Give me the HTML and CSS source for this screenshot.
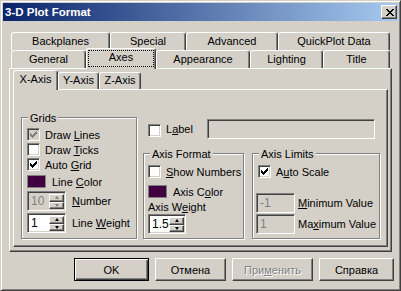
FILE: index.html
```html
<!DOCTYPE html>
<html lang="en">

<head>
    <meta charset="UTF-8">
    <title>3-D Plot Format</title>
    <link rel="stylesheet" href="styles.css">
</head>

<body>
    <div class="window">
        <div class="titlebar">
            <span class="title">3-D Plot Format</span>
            <span class="close">
                <svg width="8" height="7" viewBox="0 0 8 7" shape-rendering="crispEdges"><path d="M0 0h2v1H0zM6 0h2v1H6zM1 1h2v1H1zM5 1h2v1H5zM2 2h4v1H2zM3 3h2v1H3zM2 4h4v1H2zM1 5h2v1H1zM5 5h2v1H5zM0 6h2v1H0zM6 6h2v1H6z"/></svg>
            </span>
        </div>

        <div class="tabs">
            <div class="tab-row">
                <div class="tab" style="width: 99px">Backplanes</div>
                <div class="tab" style="width: 76px">Special</div>
                <div class="tab" style="width: 92px">Advanced</div>
                <div class="tab" style="width: 112px">QuickPlot Data</div>
            </div>
            <div class="tab-row">
                <div class="tab" style="width: 75px">General</div>
                <div class="tab active" style="width: 70px">Axes</div>
                <div class="tab" style="width: 94px">Appearance</div>
                <div class="tab" style="width: 73px">Lighting</div>
                <div class="tab" style="width: 67px">Title</div>
            </div>

            <div class="panel outer">
                <div class="subtabs">
                    <div class="subtab active" style="width: 45px">X-Axis</div>
                    <div class="subtab" style="width: 41px">Y-Axis</div>
                    <div class="subtab" style="width: 42px">Z-Axis</div>
                </div>

                <div class="panel inner">
                    <div class="group grids">
                        <span class="group-title">Grids</span>
                        <div class="row">
                            <span class="check disabled"><svg viewBox="0 0 7 7" shape-rendering="crispEdges"><path d="M6 0h1v1H6zM5 1h2v1H5zM0 2h1v1H0zM4 2h3v1H4zM0 3h2v1H0zM3 3h3v1H3zM0 4h5v1H0zM1 5h3v1H1zM2 6h1v1H2z"/></svg></span>
                            <span>Draw <u>L</u>ines</span>
                        </div>
                        <div class="row">
                            <span class="check"></span>
                            <span>Draw <u>T</u>icks</span>
                        </div>
                        <div class="row">
                            <span class="check"><svg viewBox="0 0 7 7" shape-rendering="crispEdges"><path d="M6 0h1v1H6zM5 1h2v1H5zM0 2h1v1H0zM4 2h3v1H4zM0 3h2v1H0zM3 3h3v1H3zM0 4h5v1H0zM1 5h3v1H1zM2 6h1v1H2z"/></svg></span>
                            <span>Auto <u>G</u>rid</span>
                        </div>
                        <div class="row swatch-row">
                            <span class="swatch"></span>
                            <span>Line <u>C</u>olor</span>
                        </div>
                        <div class="row spin-row">
                            <span class="spin disabled">
                                <span class="spin-text">10</span>
                                <span class="spin-btns"><span class="up"></span><span class="dn"></span></span>
                            </span>
                            <span><u>N</u>umber</span>
                        </div>
                        <div class="row spin-row gap-top">
                            <span class="spin">
                                <span class="spin-text">1</span>
                                <span class="spin-btns"><span class="up"></span><span class="dn"></span></span>
                            </span>
                            <span>Line <u>W</u>eight</span>
                        </div>
                    </div>

                    <div class="right">
                        <div class="label-row">
                            <span class="check label-check"></span>
                            <span class="label-text">L<u>a</u>bel</span>
                            <span class="field label-field"></span>
                        </div>

                        <div class="groups">
                            <div class="group fmt">
                                <span class="group-title">Axis Format</span>
                                <div class="row">
                                    <span class="check"></span>
                                    <span><u>S</u>how Numbers</span>
                                </div>
                                <div class="row swatch-row">
                                    <span class="swatch"></span>
                                    <span>Axis C<u>o</u>lor</span>
                                </div>
                                <div class="caption">Axis W<u>e</u>ight</div>
                                <span class="spin small">
                                    <span class="spin-text">1.5</span>
                                    <span class="spin-btns"><span class="up"></span><span class="dn"></span></span>
                                </span>
                            </div>

                            <div class="group limits">
                                <span class="group-title">Axis Limits</span>
                                <div class="row">
                                    <span class="check"><svg viewBox="0 0 7 7" shape-rendering="crispEdges"><path d="M6 0h1v1H6zM5 1h2v1H5zM0 2h1v1H0zM4 2h3v1H4zM0 3h2v1H0zM3 3h3v1H3zM0 4h5v1H0zM1 5h3v1H1zM2 6h1v1H2z"/></svg></span>
                                    <span>A<u>u</u>to Scale</span>
                                </div>
                                <div class="value-rows">
                                    <div class="row value-row">
                                        <span class="field value">-1</span>
                                        <span><u>M</u>inimum Value</span>
                                    </div>
                                    <div class="row value-row">
                                        <span class="field value">1</span>
                                        <span>Ma<u>x</u>imum Value</span>
                                    </div>
                                </div>
                            </div>
                        </div>
                    </div>
                </div>
            </div>
        </div>

        <div class="buttons">
            <button class="default" style="width: 75px">OK</button>
            <button style="width: 71px">Отмена</button>
            <button class="off" style="width: 81px">При<u>м</u>енить</button>
            <button style="width: 75px">Справка</button>
        </div>
    </div>
</body>

</html>
```

FILE: styles.css
```css
* {
    margin: 0;
    padding: 0;
    box-sizing: border-box;
}

body {
    background: #D4D0C8;
    font-family: "Liberation Sans", Arial, sans-serif;
    font-size: 11px;
    color: #000;
}

.window {
    width: 401px;
    height: 291px;
    padding: 2px;
    background: #D4D0C8;
    border: 1px solid;
    border-color: #D4D0C8 #404040 #404040 #D4D0C8;
    box-shadow: inset 1px 1px #fff, inset -1px -1px #808080;
}

/* title bar */

.titlebar {
    height: 18px;
    display: flex;
    align-items: center;
    justify-content: space-between;
    padding: 0 1px 0 2px;
    background: linear-gradient(to right, #0A246A, #A6CAF0);
}

.title {
    color: #fff;
    font-weight: bold;
    font-size: 11.5px;
}

.close {
    width: 16px;
    height: 14px;
    display: flex;
    align-items: center;
    justify-content: center;
    background: #D4D0C8;
    border: 1px solid;
    border-color: #fff #404040 #404040 #fff;
    box-shadow: inset -1px -1px #808080;
}

.close svg {
    display: block;
    margin-left: 1px;
}

/* tab strip */

.tabs {
    margin: 11px 6px 0;
}

.tab-row {
    display: flex;
    height: 18px;
    padding-left: 2px;
}

.tab,
.subtab {
    height: 18px;
    text-align: center;
    line-height: 16px;
    background: #D4D0C8;
    border: 1px solid;
    border-bottom: none;
    border-color: #fff #404040 transparent #fff;
    box-shadow: inset -1px 0 #808080;
    border-radius: 3px 3px 0 0;
}

.tab.active {
    position: relative;
    z-index: 1;
    margin-top: -2px;
    height: 21px;
    outline: 1px dotted #000;
    outline-offset: -3px;
}

.panel {
    border: 1px solid;
    border-color: #fff #404040 #404040 #fff;
    box-shadow: inset -1px -1px #808080;
}

.outer {
    height: 184px;
    padding: 0 3px 4px;
}

.subtabs {
    display: flex;
    height: 20px;
    padding: 3px 0 0 2px;
}

.subtab {
    height: 17px;
    line-height: 15px;
}

.subtab.active {
    position: relative;
    z-index: 1;
    margin: -2px 0 0 -2px;
    height: 20px;
    line-height: 17px;
}

.inner {
    height: 158px;
    display: flex;
    align-items: flex-start;
    gap: 6px;
    padding-left: 7px;
}

/* group boxes */

.group {
    position: relative;
    border: 1px solid #808080;
    box-shadow: inset 1px 1px #fff, 1px 1px #fff;
}

.group-title {
    position: absolute;
    top: -6px;
    left: 6px;
    padding: 0 2px;
    line-height: 13px;
    background: #D4D0C8;
}

.grids {
    margin-top: 27px;
    width: 116px;
    height: 122px;
    padding: 9px 0 0 5px;
}

.row {
    display: flex;
    align-items: center;
    gap: 5px;
    height: 15px;
}

.swatch-row {
    height: 19px;
    gap: 6px;
}

.spin-row {
    height: 20px;
    gap: 6px;
}

.gap-top {
    margin-top: 2px;
}

/* controls */

.check {
    width: 13px;
    height: 13px;
    flex: none;
    display: flex;
    align-items: center;
    justify-content: center;
    background: #fff;
    border: 1px solid;
    border-color: #808080 #fff #fff #808080;
    box-shadow: inset 1px 1px #404040, inset -1px -1px #D4D0C8;
}

.check svg {
    width: 7px;
    height: 7px;
    display: block;
    fill: #000;
}

.check.disabled {
    background: #D4D0C8;
}

.check.disabled svg {
    fill: #808080;
}

.swatch {
    width: 19px;
    height: 13px;
    flex: none;
    background: #400040;
    border: 1px solid #808080;
}

.spin,
.field {
    display: flex;
    background: #fff;
    border: 1px solid;
    border-color: #808080 #fff #fff #808080;
    box-shadow: inset 1px 1px #404040, inset -1px -1px #D4D0C8;
}

.spin {
    width: 39px;
    height: 20px;
    flex: none;
    padding: 2px 1px 1px 2px;
}

.spin.small {
    width: 38px;
}

.spin-text {
    flex: 1;
    font-size: 12px;
    line-height: 15px;
    padding-left: 1px;
    background: #fff;
}

.spin.disabled,
.spin.disabled .spin-text {
    background: #D4D0C8;
    color: #808080;
}

.spin-btns {
    width: 15px;
    display: flex;
    flex-direction: column;
}

.up,
.dn {
    flex: 1;
    display: flex;
    align-items: center;
    justify-content: center;
    background: #D4D0C8;
    border: 1px solid;
    border-color: #fff #404040 #404040 #fff;
    box-shadow: inset -1px -1px #808080;
}

.up::after,
.dn::after {
    content: "";
    border-left: 2.5px solid transparent;
    border-right: 2.5px solid transparent;
}

.up::after {
    border-bottom: 3px solid #000;
}

.dn::after {
    border-top: 3px solid #000;
}

.spin.disabled .up::after {
    border-bottom-color: #808080;
}

.spin.disabled .dn::after {
    border-top-color: #808080;
}

/* right column */

.right {
    margin-top: 29px;
    width: 238px;
}

.label-row {
    display: flex;
    align-items: flex-start;
    height: 20px;
}

.label-check {
    margin: 5px 0 0 5px;
}

.label-text {
    margin: 4px 0 0 5px;
    line-height: 13px;
}

.field {
    background: #D4D0C8;
    height: 20px;
}

.label-field {
    width: 168px;
    margin-left: auto;
    margin-right: 6px;
}

.groups {
    display: flex;
    gap: 8px;
    margin-top: 14px;
}

.fmt {
    width: 101px;
    height: 86px;
    padding: 10px 0 0 4px;
}

.fmt .swatch-row {
    margin-top: 3px;
}

.caption {
    line-height: 13px;
}

.limits {
    width: 128px;
    height: 86px;
    padding: 10px 0 0 5px;
}

.value-rows {
    display: flex;
    flex-direction: column;
    gap: 1px;
    margin: 14px 0 0 -2px;
}

.value-row {
    height: 20px;
    gap: 3px;
}

.value {
    width: 39px;
    padding: 2px 0 0 3px;
    line-height: 15px;
    font-size: 12px;
    color: #808080;
}

/* bottom buttons */

.buttons {
    display: flex;
    justify-content: flex-end;
    gap: 6px;
    margin-top: 6px;
    padding-right: 4px;
}

button {
    height: 23px;
    font-family: "Liberation Sans", Arial, sans-serif;
    font-size: 11px;
    color: #000;
    background: #D4D0C8;
    border: 1px solid;
    border-color: #fff #404040 #404040 #fff;
    box-shadow: inset -1px -1px #808080;
}

button.default {
    border-color: #000;
    box-shadow: inset 1px 1px #fff, inset -1px -1px #404040, inset -2px -2px #808080;
}

button.off {
    color: #808080;
    text-shadow: 1px 1px #fff;
}
```
